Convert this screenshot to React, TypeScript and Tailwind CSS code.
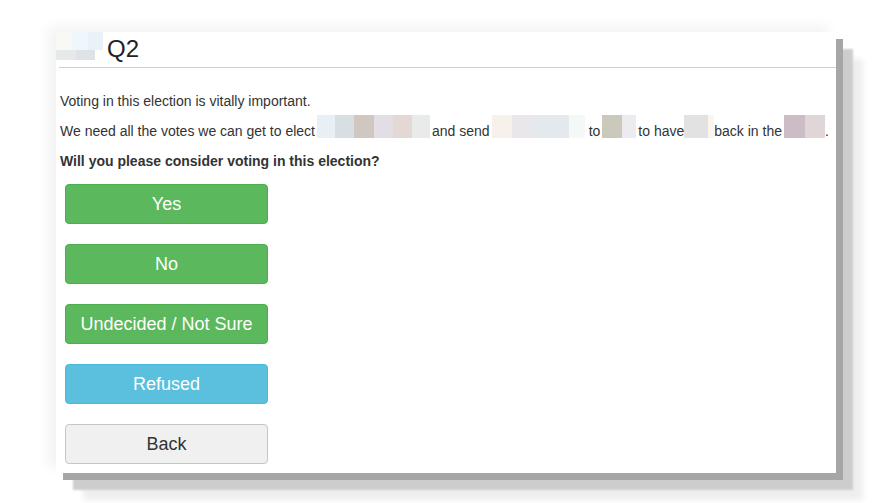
const textFont = { fontFamily: '"Liberation Sans", Arial, sans-serif' };

// blurred placeholder segments that stand in for redacted names
const Redacted = ({ colors, widths }: { colors: string[]; widths: number[] }) => (
  <span className="inline-flex h-[23px] -mt-[6px] align-[-2px]">
    {colors.map((c, i) => (
      <span key={i} className="h-full" style={{ background: c, width: widths[i] }} />
    ))}
  </span>
);

const buttons = [
  { label: "Yes", cls: "bg-[#5cb85c] border-[#4cae4c] text-white" },
  { label: "No", cls: "bg-[#5cb85c] border-[#4cae4c] text-white" },
  { label: "Undecided / Not Sure", cls: "bg-[#5cb85c] border-[#4cae4c] text-white" },
  { label: "Refused", cls: "bg-[#5bc0de] border-[#46b8da] text-white" },
  { label: "Back", cls: "bg-[#f0f0f0] border-[#c6c6c6] text-[#333]" },
];

export default function App() {
  return (
    <div className="w-[881px] h-[503px] bg-white pl-[56px] pt-[32px]" style={textFont}>
      <div className="w-[780px] h-[441px] bg-white shadow-[7px_7px_0_#a6a6a6,17px_17px_2px_#cdcdcd,27px_27px_6px_#eeeeee,-8px_-6px_12px_rgba(0,0,0,0.05)] flex flex-col">
        {/* header */}
        <div className="flex items-start h-[35px]">
          <div className="w-[47px] flex flex-col">
            <div className="flex h-[18px]">
              <span className="w-[16px] bg-[#faf8f5]" />
              <span className="w-[16px] bg-[#eef7fb]" />
              <span className="w-[15px] bg-[#e8f2f7]" />
            </div>
            <div className="flex h-[10px]">
              <span className="w-[20px] bg-[#e5e9e8]" />
              <span className="w-[19px] bg-[#dde3e6]" />
            </div>
          </div>
          <h2 className="ml-[4px] pt-[5px] text-[24px] leading-[24px] text-[#222]">Q2</h2>
        </div>
        <div className="ml-[3px] h-px bg-[#cfcfcf]" />

        {/* body */}
        <div className="pl-[4px] pt-[23px] text-[14px] leading-[20px] text-[#333]">
          <p className="mb-[10px]">Voting in this election is vitally important.</p>
          <p className="mb-[10px] whitespace-nowrap">
            We need all the votes we can get to elect
            <span className="inline-block w-[2px]" />
            <Redacted
              colors={["#e8f0f5", "#d8dfe2", "#d0c8c0", "#e3dee3", "#e3d8d3", "#e8ebea"]}
              widths={[18, 19, 20, 19, 19, 18]}
            />
            <span className="inline-block w-[2px]" />
            and send
            <span className="inline-block w-[2px]" />
            <Redacted colors={["#f7f1ec", "#e9e7ea", "#e3e9ec", "#f4f8f7"]} widths={[20, 19, 38, 16]} />
            <span className="inline-block w-[4px]" />
            to
            <span className="inline-block w-[2px]" />
            <Redacted colors={["#cbc8bc", "#ecebf0"]} widths={[20, 14]} />
            <span className="inline-block w-[2px]" />
            to have
            <Redacted colors={["#e3e2e2", "#fbf5ef"]} widths={[24, 6]} />
            back in the
            <span className="inline-block w-[2px]" />
            <Redacted colors={["#cbbcc6", "#e0d6d8"]} widths={[21, 20]} />.
          </p>
          <p className="font-bold">Will you please consider voting in this election?</p>
        </div>

        <div className="ml-[9px] mt-[13px] flex flex-col gap-[20px]">
          {buttons.map((b) => (
            <button
              key={b.label}
              className={`w-[203px] h-[40px] rounded-[4px] border text-[18px] leading-none ${b.cls}`}
            >
              {b.label}
            </button>
          ))}
        </div>
      </div>
    </div>
  );
}
